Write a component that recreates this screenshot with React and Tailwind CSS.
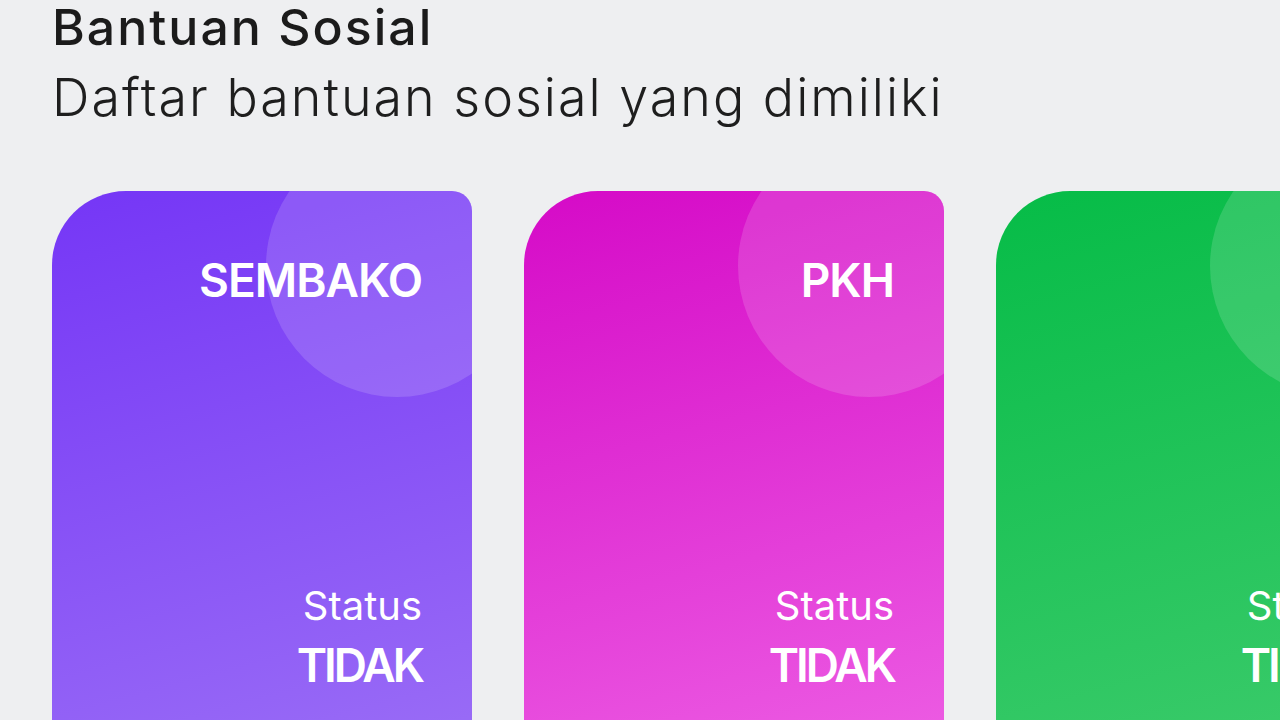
import React from "react";

const cards = [
	{ name: "SEMBAKO", status: "TIDAK", bg: "bg-[linear-gradient(165deg,#7536f6_0%,#9c70f6_100%)]" },
	{ name: "PKH", status: "TIDAK", bg: "bg-[linear-gradient(165deg,#d50ac7_0%,#ee62e5_100%)]" },
	{ name: "PBI", status: "TIDAK", bg: "bg-[linear-gradient(165deg,#06bc47_0%,#40cc6e_100%)]" },
];

const Card = ({ name, status, bg }) => {
	return (
		<div className={`relative w-[420px] h-[600px] shrink-0 overflow-hidden rounded-tl-[74px] rounded-tr-[20px] rounded-b-[20px] ${bg}`}>
			<div className="absolute left-[214px] top-[-56px] w-[262px] h-[262px] rounded-full bg-white/15"></div>
			<div className="relative flex flex-col items-end h-full pr-[50px] text-white">
				<div className="mt-[66px] text-[46px] font-semibold leading-none tracking-[-1px]">{name}</div>
				<div className="mt-[283px] text-[40px] leading-none">Status</div>
				<div className="mt-[16px] text-[46px] font-semibold leading-none tracking-[-3px]">{status}</div>
			</div>
		</div>
	);
};

const App = () => {
	return (
		<div className="w-[1280px] h-[720px] overflow-hidden bg-[#eeeff1] font-['Inter',sans-serif]">
			<div className="pl-[52px]">
				<h1 className="pt-[2px] text-[50px] font-medium leading-none text-[#1b1b1b] tracking-[2px]">
					Bantuan Sosial
				</h1>
				<p className="mt-[20px] text-[52px] font-light leading-none text-[#1e1e1e] tracking-[2px]">
					Daftar bantuan sosial yang dimiliki
				</p>
				<div className="mt-[67px] flex gap-[52px]">
					{cards.map((c) => (
						<Card key={c.name} {...c} />
					))}
				</div>
			</div>
		</div>
	);
};

export default App;
